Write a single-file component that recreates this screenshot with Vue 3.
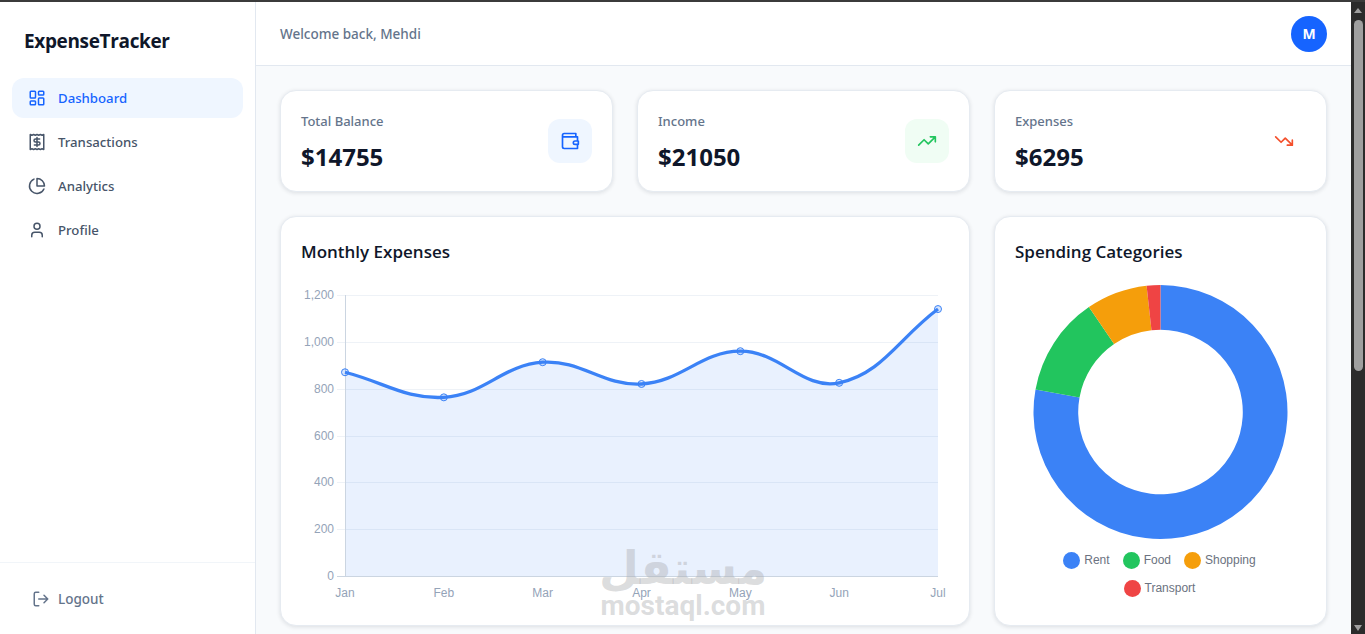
<template>
  <div class="window">
    <div class="top-stripe"></div>
    <div class="frame">
      <aside class="sidebar">
        <div class="brand">ExpenseTracker</div>
        <nav class="nav">
          <a v-for="item in navItems" :key="item.label" :class="['nav-item', { active: item.active }]">
            <svg class="nav-icon" viewBox="0 0 24 24" fill="none" stroke="currentColor" stroke-width="2" stroke-linecap="round" stroke-linejoin="round">
              <path :d="item.icon" />
            </svg>
            {{ item.label }}
          </a>
        </nav>
        <div class="sidebar-foot">
          <a class="logout">
            <svg class="nav-icon" viewBox="0 0 24 24" fill="none" stroke="currentColor" stroke-width="2" stroke-linecap="round" stroke-linejoin="round">
              <path d="M9 21H5a2 2 0 0 1-2-2V5a2 2 0 0 1 2-2h4M16 17l5-5-5-5M21 12H9" />
            </svg>
            Logout
          </a>
        </div>
      </aside>

      <div class="main">
        <header class="header">
          <span class="welcome">Welcome back, Mehdi</span>
          <span class="avatar">M</span>
        </header>

        <div class="content">
          <section class="stats">
            <div v-for="stat in stats" :key="stat.label" class="card stat">
              <div>
                <div class="stat-label">{{ stat.label }}</div>
                <div class="stat-value">{{ stat.value }}</div>
              </div>
              <span :class="['stat-icon', stat.tone]">
                <svg viewBox="0 0 24 24" fill="none" stroke="currentColor" stroke-width="2" stroke-linecap="round" stroke-linejoin="round">
                  <path :d="stat.icon" />
                </svg>
              </span>
            </div>
          </section>

          <section class="charts">
            <div class="card chart-card wide">
              <h2>Monthly Expenses</h2>
              <svg class="line-chart" width="648" height="320" viewBox="0 0 648 320">
                <g v-for="tick in yTicks" :key="tick.label">
                  <line x1="36" :x2="plot.right" :y1="tick.y" :y2="tick.y" class="grid" />
                  <text x="33" :y="tick.y + 3" text-anchor="end" class="axis-text">{{ tick.label }}</text>
                </g>
                <path :d="areaPath" fill="rgba(59,130,246,0.11)" />
                <line :x1="plot.left + 0.5" :x2="plot.left + 0.5" :y1="plot.top" :y2="plot.bottom" class="axis" />
                <line x1="36" :x2="plot.right" :y1="plot.bottom + 0.5" :y2="plot.bottom + 0.5" class="axis" />
                <path :d="linePath" fill="none" stroke="#3b82f6" stroke-width="3.3" />
                <circle
                  v-for="p in points"
                  :key="p.month"
                  :cx="p.x"
                  :cy="p.y"
                  r="3.5"
                  fill="rgba(59,130,246,0.2)"
                  stroke="#3b82f6"
                />
                <text
                  v-for="p in points"
                  :key="p.month + '-label'"
                  :x="p.x"
                  y="317"
                  text-anchor="middle"
                  class="axis-text"
                >{{ p.month }}</text>
              </svg>
            </div>

            <div class="card chart-card">
              <h2>Spending Categories</h2>
              <svg class="donut" width="291" height="256" viewBox="0 0 291 256">
                <path v-for="s in slices" :key="s.label" :d="s.path" :fill="s.color" />
              </svg>
              <div class="legend">
                <span v-for="s in slices" :key="s.label" class="legend-item">
                  <i :style="{ background: s.color }"></i>{{ s.label }}
                </span>
              </div>
            </div>
          </section>
        </div>

        <div class="watermark">
          <span class="wm-ar" lang="ar" dir="rtl">مستقل</span>
          <span class="wm-en">mostaql.com</span>
        </div>
      </div>

      <div class="scrollbar">
        <span class="arrow up"></span>
        <span class="thumb"></span>
        <span class="arrow down"></span>
      </div>
    </div>
  </div>
</template>

<script setup>
import { computed } from 'vue'

const navItems = [
  { label: 'Dashboard', active: true, icon: 'M4 3h5a1 1 0 0 1 1 1v7a1 1 0 0 1-1 1H4a1 1 0 0 1-1-1V4a1 1 0 0 1 1-1zM15 3h5a1 1 0 0 1 1 1v3a1 1 0 0 1-1 1h-5a1 1 0 0 1-1-1V4a1 1 0 0 1 1-1zM15 12h5a1 1 0 0 1 1 1v7a1 1 0 0 1-1 1h-5a1 1 0 0 1-1-1v-7a1 1 0 0 1 1-1zM4 16h5a1 1 0 0 1 1 1v3a1 1 0 0 1-1 1H4a1 1 0 0 1-1-1v-3a1 1 0 0 1 1-1z' },
  { label: 'Transactions', icon: 'M3 2v20l2.25-1 2.25 1 2.25-1 2.25 1 2.25-1 2.25 1 2.25-1 2.25 1V2l-2.25 1-2.25-1-2.25 1-2.25-1-2.25 1-2.25-1-2.25 1zM15.5 8H10a2 2 0 1 0 0 4h4a2 2 0 1 1 0 4H8.5M12 6v12' },
  { label: 'Analytics', icon: 'M21.21 15.89A10 10 0 1 1 8 2.83M22 12A10 10 0 0 0 12 2v10z' },
  { label: 'Profile', icon: 'M19 21v-2a4 4 0 0 0-4-4H9a4 4 0 0 0-4 4v2M16 7a4 4 0 1 1-8 0 4 4 0 0 1 8 0z' },
]

const stats = [
  { label: 'Total Balance', value: '$14755', tone: 'blue', icon: 'M21 12V7H5a2 2 0 0 1 0-4h14v4M3 5v14a2 2 0 0 0 2 2h16v-5M18 12a2 2 0 0 0 0 4h4v-4z' },
  { label: 'Income', value: '$21050', tone: 'green', icon: 'M22 7l-8.5 8.5-5-5L2 17M16 7h6v6' },
  { label: 'Expenses', value: '$6295', tone: 'red', icon: 'M22 17l-8.5-8.5-5 5L2 7M16 17h6v-6' },
]

const plot = { left: 44, right: 637, top: 15, bottom: 296 }
const maxValue = 1200
const scaleY = (v) => plot.bottom - (v / maxValue) * (plot.bottom - plot.top)

const yTicks = [0, 200, 400, 600, 800, 1000, 1200].map((v) => ({
  label: v.toLocaleString('en-US'),
  y: Math.round(scaleY(v)) + 0.5,
}))

const monthly = [
  ['Jan', 870], ['Feb', 763], ['Mar', 913], ['Apr', 820], ['May', 960], ['Jun', 825], ['Jul', 1140],
]

const points = monthly.map(([month, v], i) => ({
  month,
  x: plot.left + (i * (plot.right - plot.left)) / (monthly.length - 1),
  y: scaleY(v),
}))

// same spline chart.js uses for tension 0.4
const linePath = computed(() => {
  const tension = 0.4
  const ctrl = points.map((cur, i) => {
    const prev = points[i - 1] || cur
    const next = points[i + 1] || cur
    const d01 = Math.hypot(cur.x - prev.x, cur.y - prev.y)
    const d12 = Math.hypot(next.x - cur.x, next.y - cur.y)
    const total = d01 + d12 || 1
    const fa = (tension * d01) / total
    const fb = (tension * d12) / total
    return {
      inX: cur.x - fa * (next.x - prev.x),
      inY: cur.y - fa * (next.y - prev.y),
      outX: cur.x + fb * (next.x - prev.x),
      outY: cur.y + fb * (next.y - prev.y),
    }
  })
  let d = `M${points[0].x} ${points[0].y}`
  for (let i = 1; i < points.length; i++) {
    const a = ctrl[i - 1]
    const b = ctrl[i]
    d += ` C${a.outX} ${a.outY} ${b.inX} ${b.inY} ${points[i].x} ${points[i].y}`
  }
  return d
})

const areaPath = computed(() => `${linePath.value} L${plot.right} ${plot.bottom} L${plot.left} ${plot.bottom} Z`)

const categories = [
  { label: 'Rent', value: 4900, color: '#3b82f6' },
  { label: 'Food', value: 795, color: '#22c55e' },
  { label: 'Shopping', value: 490, color: '#f59e0b' },
  { label: 'Transport', value: 110, color: '#ef4444' },
]

const slices = computed(() => {
  const cx = 145.5
  const cy = 127
  const outer = 127
  const inner = 82.3
  const total = categories.reduce((sum, c) => sum + c.value, 0)
  let start = 0
  const at = (r, angle) => `${cx + r * Math.sin(angle)} ${cy - r * Math.cos(angle)}`
  return categories.map((c) => {
    const end = start + (c.value / total) * Math.PI * 2
    const large = end - start > Math.PI ? 1 : 0
    const path = `M${at(outer, start)} A${outer} ${outer} 0 ${large} 1 ${at(outer, end)} L${at(inner, end)} A${inner} ${inner} 0 ${large} 0 ${at(inner, start)} Z`
    start = end
    return { ...c, path }
  })
})
</script>

<style>
html,
body {
  margin: 0;
  overflow: hidden;
}
</style>

<style scoped>
.window {
  height: 634px;
  display: flex;
  flex-direction: column;
  overflow: hidden;
  font-family: "Open Sans", "Noto Sans", sans-serif;
  background: #f8fafc;
  color: #0f172a;
}

.top-stripe {
  height: 2px;
  flex-shrink: 0;
  background: #3b3b3b;
}

.frame {
  flex: 1;
  display: flex;
  min-height: 0;
}

.sidebar {
  width: 255px;
  flex-shrink: 0;
  display: flex;
  flex-direction: column;
  background: #fff;
  border-right: 1px solid #e2e8f0;
}

.brand {
  padding: 26px 24px 0;
  height: 50px;
  font-size: 19px;
  line-height: 27px;
  font-weight: 700;
  letter-spacing: -0.35px;
  color: #0f172a;
}

.nav {
  padding: 0 12px;
  display: flex;
  flex-direction: column;
  gap: 4px;
}

.nav-item {
  height: 40px;
  display: flex;
  align-items: center;
  gap: 12px;
  padding: 0 16px;
  border-radius: 12px;
  font-family: "Noto Sans", sans-serif;
  font-size: 13.2px;
  font-weight: 500;
  color: #475569;
}

.nav-item.active {
  background: #eff6ff;
  color: #1664ff;
}

.nav-icon {
  width: 18px;
  height: 18px;
  flex-shrink: 0;
}

.sidebar-foot {
  margin-top: auto;
  height: 71px;
  padding: 0 32px;
  display: flex;
  align-items: center;
  border-top: 1px solid #f1f5f9;
}

.logout {
  display: flex;
  align-items: center;
  gap: 8px;
  font-family: "Noto Sans", sans-serif;
  font-size: 13.5px;
  font-weight: 500;
  color: #64748b;
}

.main {
  flex: 1;
  min-width: 0;
  position: relative;
  display: flex;
  flex-direction: column;
}

.header {
  height: 63px;
  flex-shrink: 0;
  display: flex;
  align-items: center;
  justify-content: space-between;
  padding: 0 24px;
  background: #fff;
  border-bottom: 1px solid #e2e8f0;
}

.welcome {
  font-family: "Noto Sans", sans-serif;
  font-size: 13.5px;
  font-weight: 500;
  color: #64748b;
}

.avatar {
  width: 36px;
  height: 36px;
  border-radius: 50%;
  display: flex;
  align-items: center;
  justify-content: center;
  background: #1664ff;
  color: #fff;
  font-size: 14px;
  font-weight: 700;
}

.content {
  padding: 24px;
  display: flex;
  flex-direction: column;
  gap: 24px;
}

.stats,
.charts {
  display: grid;
  grid-template-columns: repeat(3, 1fr);
  gap: 24px;
}

.card {
  background: #fff;
  border: 1px solid #e6ebf1;
  border-radius: 16px;
  box-shadow: 0 1px 4px rgba(15, 23, 42, 0.12);
  box-sizing: border-box;
}

.stat {
  height: 102px;
  padding: 3px 20px 0;
  display: flex;
  align-items: center;
  justify-content: space-between;
}

.stat-label {
  font-family: "Noto Sans", sans-serif;
  font-size: 13px;
  line-height: 18px;
  font-weight: 500;
  color: #64748b;
}

.stat-value {
  margin-top: 11px;
  font-size: 24px;
  line-height: 32px;
  font-weight: 700;
  color: #0f172a;
}

.stat-icon {
  width: 44px;
  height: 44px;
  margin-top: -3px;
  border-radius: 12px;
  display: flex;
  align-items: center;
  justify-content: center;
}

.stat-icon svg {
  width: 20px;
  height: 20px;
}

.stat-icon.blue {
  background: #eff6ff;
  color: #1664ff;
}

.stat-icon.green {
  background: #f0fdf4;
  color: #22c55e;
}

.stat-icon.red {
  background: #fff;
  color: #f4502c;
}

.chart-card {
  height: 410px;
  padding: 21px 20px 0;
}

.chart-card.wide {
  grid-column: span 2;
}

.chart-card h2 {
  margin: 0;
  font-size: 17px;
  line-height: 28px;
  font-weight: 600;
  color: #0f172a;
}

.line-chart {
  display: block;
  margin-top: 14px;
}

.grid {
  stroke: #eef2f7;
  stroke-width: 1;
}

.axis {
  stroke: #cbd5e1;
  stroke-width: 1;
}

.axis-text {
  font-family: "Liberation Sans", Arial, sans-serif;
  font-size: 12px;
  fill: #94a3b8;
}

.donut {
  display: block;
  margin-top: 19px;
}

.legend {
  width: 240px;
  box-sizing: border-box;
  padding-right: 2px;
  margin: 5px auto 0;
  display: flex;
  flex-wrap: wrap;
  justify-content: center;
  gap: 0 13px;
}

.legend-item {
  height: 28px;
  display: flex;
  align-items: center;
  gap: 4px;
  font-family: "Liberation Sans", Arial, sans-serif;
  font-size: 12px;
  color: #6b7280;
}

.legend-item i {
  width: 17px;
  height: 17px;
  border-radius: 50%;
}

.watermark {
  position: absolute;
  left: 344px;
  top: 541px;
  width: 166px;
  display: flex;
  flex-direction: column;
  align-items: center;
  pointer-events: none;
  color: rgba(170, 172, 176, 0.42);
  font-weight: 700;
}

.wm-ar {
  font-family: "DejaVu Sans", sans-serif;
  font-size: 46px;
  line-height: 50px;
}

.wm-en {
  font-family: "Roboto", sans-serif;
  font-size: 28px;
  line-height: 26px;
  font-weight: 700;
}

.scrollbar {
  width: 14px;
  flex-shrink: 0;
  background: #2b2b2b;
  display: flex;
  flex-direction: column;
  align-items: center;
}

.thumb {
  width: 9px;
  height: 351px;
  margin-top: 7px;
  border-radius: 5px;
  background: #9f9f9f;
}

.arrow {
  width: 0;
  height: 0;
  border-left: 4.5px solid transparent;
  border-right: 4.5px solid transparent;
}

.arrow.up {
  margin-top: 6px;
  border-bottom: 5px solid #9f9f9f;
}

.arrow.down {
  margin-top: auto;
  margin-bottom: 3px;
  border-top: 6px solid #9f9f9f;
}
</style>
